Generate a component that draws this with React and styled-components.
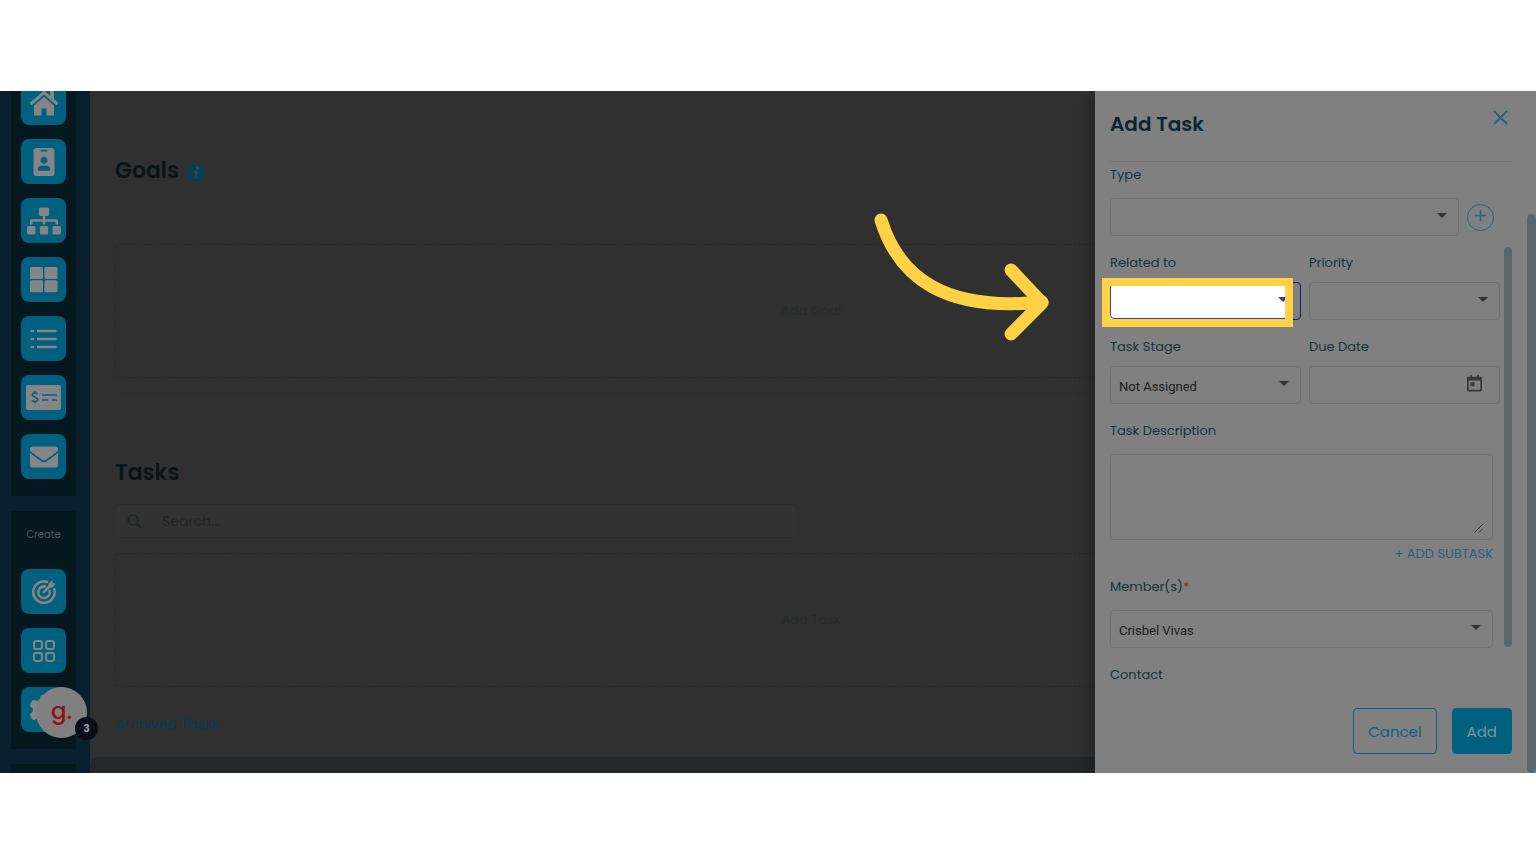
import React from 'react';
import styled, { createGlobalStyle } from 'styled-components';
import { FaIdBadge, FaSitemap, FaEnvelope } from 'react-icons/fa';
import { FaGear } from 'react-icons/fa6';

const GlobalStyle = createGlobalStyle`
  :root {
    --ink: #0a2531;
    --label: #16323c;
    --accent: #00607f;
    --line: #707374;
    --panel: #808080;
    --marker: #ffd145;
  }

  * {
    box-sizing: border-box;
  }

  body {
    margin: 0;
    background: #fff;
    font-family: Poppins, Inter, "Open Sans", sans-serif;
  }

  button, input, select, textarea {
    font-family: inherit;
  }
`;

const Page = styled.div`
  min-height: 100vh;
  display: flex;
  flex-direction: column;
  padding: 91px 0;
`;

const Stage = styled.div`
  position: relative;
  flex: 1;
  display: flex;
  overflow: hidden;
  background: #303030;
`;

/* sidebar */

const Sidebar = styled.nav`
  position: relative;
  width: 90px;
  flex-shrink: 0;
  display: flex;
  flex-direction: column;
  gap: 15px;
  padding: 0 14px 0 11px;
  background: #0a1f2d;
`;

const NavGroup = styled.div`
  display: flex;
  flex-direction: column;
  align-items: center;
  gap: 14px;
  padding-bottom: 17px;
  background: #051820;

  &:first-child {
    margin-top: -11px;
  }

  &:last-of-type {
    flex: 1;
    padding: 0;
  }
`;

const GroupLabel = styled.span`
  padding: 16px 0 12px;
  font-size: 10px;
  line-height: 16px;
  color: #4d595e;
`;

const NavButton = styled.button`
  width: 45px;
  height: 45px;
  display: flex;
  align-items: center;
  justify-content: center;
  padding: 0;
  border: none;
  border-radius: 8px;
  background: var(--accent);
  color: #858585;
`;

const GuideBubble = styled.button`
  position: absolute;
  left: 36px;
  bottom: 35px;
  width: 51px;
  height: 51px;
  padding: 0 0 4px;
  border: none;
  border-radius: 50%;
  background: #808080;
  color: #8f1015;
  font-size: 23px;
  font-weight: 500;
  line-height: 44px;
  z-index: 2;
`;

const BubbleCount = styled.span`
  position: absolute;
  right: -11px;
  bottom: -2px;
  width: 23px;
  height: 23px;
  border-radius: 50%;
  background: #080d1a;
  color: #999;
  font-size: 11px;
  font-weight: 700;
  line-height: 23px;
`;

/* main content */

const Main = styled.main`
  flex: 1;
  min-width: 0;
  display: flex;
  flex-direction: column;
`;

const Content = styled.div`
  flex: 1;
  padding: 64px 29px 0 25px;
`;

const Heading = styled.h2`
  display: flex;
  align-items: center;
  gap: 8px;
  margin: 0;
  font-size: 22px;
  font-weight: 600;
  line-height: 32px;
  color: #091419;
`;

const EmptyBox = styled.div`
  height: 134px;
  display: flex;
  align-items: center;
  justify-content: center;
  margin-top: ${(props) => props.$gap};
  border: 1px dashed #272a2c;
  border-radius: 4px;
`;

const GhostButton = styled.button`
  border: none;
  background: none;
  color: #272b2d;
  font-size: 13px;
`;

const Divider = styled.hr`
  margin: 15px 0 63px;
  border: none;
  border-top: 1px solid #2b2e2f;
`;

const SearchBox = styled.label`
  width: 682px;
  max-width: 100%;
  height: 34px;
  display: flex;
  align-items: center;
  gap: 18px;
  margin-top: 15px;
  padding: 0 11px;
  border: 1px solid #2b2d2e;
  border-radius: 4px;
  background: #323232;
  color: #222628;

  input {
    flex: 1;
    border: none;
    background: none;
    outline: none;
    font-size: 14px;
  }

  input::placeholder {
    color: #222628;
    opacity: 1;
  }
`;

const ArchiveLink = styled.a`
  display: inline-block;
  margin-top: 25px;
  font-size: 14px;
  line-height: 24px;
  color: #053a50;
  text-decoration: none;
`;

const BottomBar = styled.div`
  height: 16px;
  border-radius: 8px 0 0 0;
  background: #24282b;
`;

/* drawer */

const Drawer = styled.aside`
  position: absolute;
  top: 0;
  right: 0;
  bottom: 0;
  width: 441px;
  display: flex;
  gap: 15px;
  padding-left: 15px;
  background: var(--panel);
  box-shadow: -4px 0 16px rgba(0, 0, 0, 0.3);
`;

const DrawerForm = styled.form`
  flex: 1;
  min-width: 0;
`;

const PageThumb = styled.div`
  width: 9px;
  margin-top: 123px;
  border-radius: 5px;
  background: #5a666e;
`;

const DrawerHeader = styled.header`
  height: 71px;
  display: flex;
  justify-content: space-between;
  align-items: flex-start;
  padding: 17px 2px 0 0;
  border-bottom: 1px solid #737778;
`;

const DrawerTitle = styled.h1`
  margin: 0;
  font-size: 20px;
  font-weight: 600;
  line-height: 32px;
  color: var(--ink);
`;

const CloseButton = styled.button`
  display: flex;
  padding: 2px;
  border: none;
  background: none;
  color: #21648a;
`;

const Field = styled.div`
  position: relative;
  flex: 1;
  min-width: 0;
`;

const Label = styled.label`
  display: block;
  margin-bottom: ${(props) => (props.$tight ? '8px' : '12px')};
  font-size: 13px;
  line-height: 22px;
  color: var(--label);
`;

const Required = styled.span`
  color: #8d2a2a;
`;

const Control = styled.div`
  position: relative;
  display: flex;
  align-items: center;
`;

const Select = styled.select`
  width: 100%;
  height: 38px;
  padding: 2px 28px 0 8px;
  appearance: none;
  border: 1px solid ${(props) => (props.$active ? '#1c1c58' : 'var(--line)')};
  border-radius: 4px;
  background: transparent;
  color: #1c1c1c;
  font-family: Roboto, sans-serif;
  font-size: 13px;
`;

const DateInput = styled.input`
  width: 100%;
  height: 38px;
  padding: 0 40px 0 8px;
  border: 1px solid var(--line);
  border-radius: 4px;
  background: transparent;
`;

const CaretIcon = styled.svg`
  position: absolute;
  right: 12px;
  top: 15px;
  pointer-events: none;
`;

const CalendarButton = styled.button`
  position: absolute;
  right: 18px;
  top: 9px;
  display: flex;
  padding: 0;
  border: none;
  background: none;
  color: #383838;
`;

const TypeRow = styled.div`
  display: flex;
  align-items: flex-end;
  gap: 8px;
  padding: 2px 18px 0 0;
`;

const AddTypeButton = styled.button`
  width: 27px;
  height: 27px;
  display: flex;
  justify-content: center;
  margin-bottom: 5px;
  padding: 5px 0 0;
  border: 1px solid #1d6885;
  border-radius: 50%;
  background: none;
  color: #1d6885;
`;

const ScrollArea = styled.div`
  display: flex;
  gap: 4px;
  margin-top: 11px;
`;

const ScrollThumb = styled.div`
  width: 8px;
  height: 400px;
  border-radius: 4px;
  background: #5a6668;
`;

const Fields = styled.div`
  flex: 1;
  min-width: 0;
  display: flex;
  flex-direction: column;
  gap: 16px;
  padding-top: 5px;
`;

const FieldPair = styled.div`
  display: flex;
  gap: 8px;
`;

const WideField = styled.div`
  padding-right: 7px;
`;

const TextArea = styled.textarea`
  display: block;
  width: 100%;
  height: 86px;
  resize: none;
  border: 1px solid var(--line);
  border-radius: 4px;
  background: transparent;
`;

const GripIcon = styled.svg`
  position: absolute;
  right: 10px;
  bottom: 7px;
  pointer-events: none;
`;

const SubtaskButton = styled.button`
  display: block;
  margin: 4px 0 -4px auto;
  padding: 0;
  border: none;
  background: none;
  color: #2c5f80;
  font-size: 13px;
  line-height: 20px;
`;

const Actions = styled.div`
  display: flex;
  justify-content: flex-end;
  gap: 15px;
  margin-top: 10px;
`;

const ActionButton = styled.button`
  height: 46px;
  padding: 0 14px;
  border: 1px solid var(--accent);
  border-radius: 4px;
  background: ${(props) => (props.$filled ? 'var(--accent)' : 'transparent')};
  color: ${(props) => (props.$filled ? '#7f9299' : '#0e5f80')};
  font-size: 15px;
`;

/* walkthrough marker over the focused field */

const Spotlight = styled.div`
  position: absolute;
  top: 26px;
  left: -8px;
  right: 8px;
  height: 49px;
  overflow: hidden;
  border: 8px solid var(--marker);
  background: #fff;
  pointer-events: none;
`;

const SpotlightField = styled.div`
  width: 191px;
  height: 38px;
  margin-top: -5px;
  position: relative;
  border: 1px solid #3c3ca0;
  border-radius: 4px;
`;

const Pointer = styled.svg`
  position: absolute;
  right: 100%;
  top: -41px;
  margin-right: 60px;
  pointer-events: none;
`;

const Caret = ({ color = '#333' }) => (
  <CaretIcon width="10" height="5" viewBox="0 0 10 5" aria-hidden="true">
    <path d="M0 0h10L5 5z" fill={color} />
  </CaretIcon>
);

const HomeIcon = () => (
  <svg width="30" height="28" viewBox="0 0 30 28" fill="currentColor">
    <path d="M15 1.5 0.6 14l2 2.3L15 5.6l12.400 10.700 2-2.300-4.400-3.800V1h-4v5.700z" />
    <path d="M15 7.800 5 16.400V26.500h7.500v-7h5v7H25V16.400z" />
  </svg>
);

const TilesIcon = () => (
  <svg width="28" height="26" viewBox="0 0 28 26" fill="currentColor">
    <rect width="13" height="12" rx="1.500" />
    <rect x="14.500" width="13" height="12" rx="1.500" />
    <rect y="13.300" width="13" height="12" rx="1.500" />
    <rect x="14.500" y="13.300" width="13" height="12" rx="1.500" />
  </svg>
);

const ListIcon = () => (
  <svg width="27" height="20" viewBox="0 0 27 20" fill="none" stroke="currentColor" strokeWidth="2.500" strokeLinecap="round">
    <path d="M1.500 2H3M1.500 10H3M1.500 18H3M8 2h17.500M8 10h17.500M8 18h17.500" />
  </svg>
);

const CheckIcon = () => (
  <svg width="35" height="25" viewBox="0 0 35 25">
    <rect width="35" height="25" rx="2" fill="currentColor" />
    <g fill="none" stroke="#00607f" strokeWidth="1.500">
      <path d="M16 10h15M16 15h6M26 15h5" />
      <path d="M11.500 9.200C10.800 8.300 9.800 8 8.800 8 7.400 8 6.300 8.800 6.300 10c0 2.800 5.400 1.700 5.400 4.500 0 1.200-1.200 2-2.700 2-1.200 0-2.200-.4-3-1.300M9 6v2M9 16.500v2" />
    </g>
  </svg>
);

const TargetIcon = () => (
  <svg width="26" height="26" viewBox="0 0 26 26" fill="none" stroke="currentColor" strokeWidth="2.600">
    <path d="M17 3.200A10.700 10.700 0 1 0 22.900 9.200" />
    <path d="M15 7.800A5.800 5.800 0 1 0 18.300 11" />
    <path d="M12.800 13.200 19.500 6.500" strokeLinecap="round" />
    <path d="M17.500 8.500V4.800L21 1.300l.9 2.800 2.800.9-3.500 3.500z" fill="currentColor" stroke="none" />
  </svg>
);

const AppsIcon = () => (
  <svg width="22" height="22" viewBox="0 0 22 22" fill="none" stroke="currentColor" strokeWidth="2">
    <rect x="1" y="1" width="8" height="8" rx="2.200" />
    <rect x="13" y="1" width="8" height="8" rx="2.200" />
    <rect x="1" y="13" width="8" height="8" rx="2.200" />
    <rect x="13" y="13" width="8" height="8" rx="2.200" />
  </svg>
);

const InfoIcon = () => (
  <svg width="18" height="22" viewBox="0 0 18 22" role="img" aria-label="About goals">
    <circle cx="9" cy="13" r="9" fill="#053f53" />
    <circle cx="10.300" cy="8.300" r="1.500" fill="#3c4345" />
    <path d="M7 11.800h2.500L8.300 17.500h2.300" fill="none" stroke="#3c4345" strokeWidth="2" />
  </svg>
);

const SearchIcon = () => (
  <svg width="15" height="15" viewBox="0 0 15 15" fill="none" stroke="currentColor" strokeWidth="1.800">
    <circle cx="6" cy="6" r="4.800" />
    <path d="m9.500 9.500 4.500 4.500" />
  </svg>
);

const CalendarIcon = () => (
  <svg width="15" height="17" viewBox="0 0 15 17" fill="currentColor">
    <path fillRule="evenodd" d="M3 0h1.700v1.700h5.600V0H12v1.700h1.300c.9 0 1.700.7 1.700 1.600v11.500c0 .9-.8 1.700-1.700 1.700H1.700C.8 16.500 0 15.700 0 14.800V3.300c0-.9.8-1.600 1.700-1.600H3zM1.700 5.500v9.300h11.600V5.500z" />
    <rect x="3.500" y="7.200" width="4" height="4" />
  </svg>
);

const mainNav = [
  { name: 'Home', icon: <HomeIcon /> },
  { name: 'Contacts', icon: <FaIdBadge size={28} /> },
  { name: 'Organization', icon: <FaSitemap size={34} /> },
  { name: 'Boards', icon: <TilesIcon /> },
  { name: 'Lists', icon: <ListIcon /> },
  { name: 'Payments', icon: <CheckIcon /> },
  { name: 'Mail', icon: <FaEnvelope size={28} /> },
];

const createNav = [
  { name: 'Goal', icon: <TargetIcon /> },
  { name: 'App', icon: <AppsIcon /> },
  { name: 'Settings', icon: <FaGear size={30} /> },
];

const NavItems = ({ items }) =>
  items.map(({ name, icon }) => (
    <NavButton key={name} type="button" aria-label={name}>
      {icon}
    </NavButton>
  ));

const SelectField = ({ id, label, value, tight, active, required, children }) => (
  <Field>
    <Label htmlFor={id} $tight={tight}>
      {label}
      {required && <Required>*</Required>}
    </Label>
    <Control>
      <Select id={id} $active={active} defaultValue={value || ''}>
        <option value={value || ''}>{value || ''}</option>
      </Select>
      <Caret />
    </Control>
    {children}
  </Field>
);

const FocusMarker = () => (
  <>
    <Spotlight>
      <SpotlightField>
        <Caret color="#3c3ca0" />
      </SpotlightField>
    </Spotlight>
    <Pointer width="176" height="130" viewBox="0 0 176 130" fill="none" stroke="#ffd145" strokeWidth="13" strokeLinecap="round" strokeLinejoin="round">
      <path d="M7 9C25 67 71 101 168 91" />
      <path d="M137 59 168 92 137 123" />
    </Pointer>
  </>
);

const AddTaskDrawer = () => (
  <Drawer>
    <DrawerForm onSubmit={(e) => e.preventDefault()}>
      <DrawerHeader>
        <DrawerTitle>Add Task</DrawerTitle>
        <CloseButton type="button" aria-label="Close">
          <svg width="15" height="15" viewBox="0 0 15 15" fill="none" stroke="currentColor" strokeWidth="2">
            <path d="m1 1 13 13M14 1 1 14" />
          </svg>
        </CloseButton>
      </DrawerHeader>

      <TypeRow>
        <SelectField id="type" label="Type" />
        <AddTypeButton type="button" aria-label="Add type">
          <svg width="11" height="11" viewBox="0 0 11 11" stroke="currentColor" strokeWidth="1.500">
            <path d="M5.500 0v11M0 5.500h11" />
          </svg>
        </AddTypeButton>
      </TypeRow>

      <ScrollArea>
        <Fields>
          <FieldPair>
            <SelectField id="related" label="Related to" tight active>
              <FocusMarker />
            </SelectField>
            <SelectField id="priority" label="Priority" tight />
          </FieldPair>
          <FieldPair>
            <SelectField id="stage" label="Task Stage" value="Not Assigned" tight />
            <Field>
              <Label htmlFor="due" $tight>Due Date</Label>
              <Control>
                <DateInput id="due" type="text" />
                <CalendarButton type="button" aria-label="Pick a date">
                  <CalendarIcon />
                </CalendarButton>
              </Control>
            </Field>
          </FieldPair>
          <WideField>
            <Label htmlFor="description">Task Description</Label>
            <Control>
              <TextArea id="description" />
              <GripIcon width="9" height="9" viewBox="0 0 9 9" stroke="#333">
                <path d="M.5 8.500l8-8M5 8.500 8.500 5" />
              </GripIcon>
            </Control>
            <SubtaskButton type="button">+ ADD SUBTASK</SubtaskButton>
          </WideField>
          <WideField>
            <SelectField id="members" label="Member(s)" value="Crisbel Vivas" required />
          </WideField>
          <Label as="span">Contact</Label>
        </Fields>
        <ScrollThumb />
      </ScrollArea>

      <Actions>
        <ActionButton type="button">Cancel</ActionButton>
        <ActionButton type="submit" $filled>Add</ActionButton>
      </Actions>
    </DrawerForm>
    <PageThumb />
  </Drawer>
);

const App = () => {
  return (
    <>
      <GlobalStyle />
      <Page>
        <Stage>
          <Sidebar>
            <NavGroup>
              <NavItems items={mainNav} />
            </NavGroup>
            <NavGroup>
              <GroupLabel>Create</GroupLabel>
              <NavItems items={createNav} />
            </NavGroup>
            <NavGroup />
            <GuideBubble type="button" aria-label="Open guide">
              g.
              <BubbleCount>3</BubbleCount>
            </GuideBubble>
          </Sidebar>
          <Main>
            <Content>
              <Heading>
                Goals <InfoIcon />
              </Heading>
              <EmptyBox $gap="57px">
                <GhostButton type="button">Add Goal</GhostButton>
              </EmptyBox>
              <Divider />
              <Heading>Tasks</Heading>
              <SearchBox>
                <SearchIcon />
                <input type="text" placeholder="Search..." aria-label="Search tasks" />
              </SearchBox>
              <EmptyBox $gap="15px">
                <GhostButton type="button">Add Task</GhostButton>
              </EmptyBox>
              <ArchiveLink href="#archived">Archived Tasks</ArchiveLink>
            </Content>
            <BottomBar />
          </Main>
          <AddTaskDrawer />
        </Stage>
      </Page>
    </>
  );
};

export default App;
